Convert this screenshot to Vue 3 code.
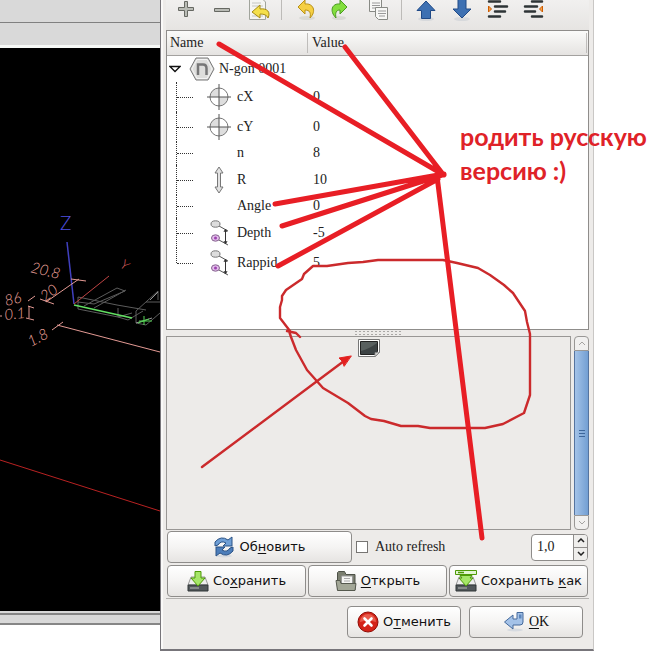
<script setup>
import { ref } from 'vue'

const rows = ref([
  { name: 'cX', value: '0', icon: 'center', size: 'tall' },
  { name: 'cY', value: '0', icon: 'center', size: 'tall' },
  { name: 'n', value: '8', icon: '', size: 'short' },
  { name: 'R', value: '10', icon: 'radius', size: 'tall' },
  { name: 'Angle', value: '0', icon: '', size: 'short' },
  { name: 'Depth', value: '-5', icon: 'depth', size: 'tall' },
  { name: 'Rappid', value: '5', icon: 'depth', size: 'tall last' }
])
const autoRefresh = ref(false)
const interval = ref('1,0')

function step(delta) {
  const next = Math.max(0, parseFloat(interval.value.replace(',', '.')) + delta)
  interval.value = next.toFixed(1).replace('.', ',')
}
</script>

<template>
  <main class="screen">
    <section class="editor" aria-label="Preview">
      <div class="bar"></div>
      <div class="bar second"></div>
      <svg class="canvas" viewBox="0 48 160 563" preserveAspectRatio="xMinYMin slice" fill="none" stroke-width="1">
        <g stroke="#5c5c5c">
          <path d="M78 297V309L118 317M78 297L117 305 146 310M78 302L94 304 125 291 117 288 84 306M94 308L126 290M118 308V317L128 320 143 311M136 311V323L146 325 160 313M136 311L158 291V300M146 302L160 302M118 317L132 313" />
          <path d="M150 300L158 292M136 323L152 318" stroke="#969696" />
        </g>
        <path d="M74 305L132 318" stroke="#62e062" stroke-width="1.500" />
        <path d="M139 321H152M144 316V325M138 323L149 319" stroke="#55d455" />
        <path d="M67 242L74 304" stroke="#4040c0" stroke-width="1.500" />
        <path d="M74 304L109 276" stroke="#c04444" />
        <path d="M0 460L160 511" stroke="#b82222" />
        <g stroke="#e49a94">
          <path d="M46 302L79 279M40 299L54 304M71 279L86 281M57 325L160 352M52 330L63 322M28 301L35 296M0 316H2M28 306L34 308M26 318L34 320M29 306V318" />
        </g>
        <text x="60" y="230" class="axis-z">Z</text>
        <text transform="translate(119 266) rotate(40)" class="axis-y">Y</text>
        <g class="dims">
          <text transform="translate(30 272) rotate(14)">20.8</text>
          <text transform="translate(45 302) rotate(-36)">20</text>
          <text transform="translate(6 306) rotate(-14)">86</text>
          <text transform="translate(5 320) rotate(-6)">0.1</text>
          <text transform="translate(31 347) rotate(-28)">1.8</text>
        </g>
      </svg>
      <div class="status"></div>
    </section>

    <section class="dialog" aria-label="Properties">
      <div class="toolbar">
        <button aria-label="Add"><svg viewBox="0 0 24 24"><path d="M10.500 3.500h3v6h6v3h-6v6h-3v-6h-6v-3h6z" fill="#b9bbb5" stroke="#666862" /></svg></button>
        <button aria-label="Remove"><svg viewBox="0 0 24 24"><path d="M4.500 10.500h15v3h-15z" fill="#b9bbb5" stroke="#666862" /></svg></button>
        <button aria-label="Revert"><svg viewBox="0 0 24 24">
          <path d="M3.500 1h13l3 3v17.500h-16z" fill="#f5f5f2" stroke="#a1a49c" /><path d="M6 5h9M6 8h11M6 18h11" stroke="#c4c6c1" />
          <path d="M6 14l8-7v4c7-1 11 3 8 9-1-3-4-4-8-4v4z" fill="#f5e04a" stroke="#a58a14" />
        </svg></button>
        <span class="divider"></span>
        <button aria-label="Undo"><svg viewBox="0 0 24 24">
          <ellipse cx="13" cy="20" rx="8" ry="2" fill="#d9d9d5" /><path d="M4 9l7-7v4c8-1 12 7 5 14 1-5 0-8-5-8v4z" fill="#f5cf42" stroke="#b99116" />
        </svg></button>
        <button aria-label="Redo"><svg viewBox="0 0 24 24">
          <ellipse cx="9" cy="20" rx="7" ry="2" fill="#d9d9d5" /><path d="M17 9l-7-7v4C2 5-1 13 6 20c-1-5 0-8 4-8v4z" fill="#83df3e" stroke="#4b9a21" />
        </svg></button>
        <button aria-label="Duplicate"><svg viewBox="-1 0 24 24">
          <path d="M2.500 1h12v12.500h-12z" fill="#f7f7f5" stroke="#888a85" /><path d="M5 5h8M5 7.500h8M5 10h6" stroke="#999" />
          <path d="M8.500 9.500h12v12h-9l-3-3z" fill="#f7f7f5" stroke="#888a85" /><path d="M11 13h8M11 15.500h8M12 18h6" stroke="#999" />
        </svg></button>
        <span class="divider"></span>
        <button aria-label="Move up"><svg viewBox="0 0 24 24">
          <ellipse cx="12" cy="21" rx="8" ry="2" fill="#d7d9dc" /><path d="M12 3L21 12.500H16.500V20.500H7.500V12.500H3z" fill="#3d70b2" stroke="#204a87" />
        </svg></button>
        <button aria-label="Move down"><svg viewBox="0 0 24 24">
          <ellipse cx="12" cy="21" rx="8" ry="2" fill="#d7d9dc" /><path d="M8 1h8v10h5L12 20 3 11h5z" fill="#3d70b2" stroke="#204a87" />
        </svg></button>
        <button aria-label="Indent"><svg viewBox="0 0 24 24">
          <path d="M3 3.500h11M9 8.500h12M9 13.500h10M3 18.500h11" stroke="#2e3436" stroke-width="2.500" stroke-linecap="round" /><path d="M2.500 8l3 3-3 3z" fill="#f5a34d" stroke="#ce5c00" />
        </svg></button>
        <button aria-label="Outdent"><svg viewBox="0 0 24 24">
          <path d="M10 3.500h10M3 8.500h12M3 13.500h10M10 18.500h10" stroke="#2e3436" stroke-width="2.500" stroke-linecap="round" /><path d="M20.500 8l-3 3 3 3z" fill="#f5a34d" stroke="#ce5c00" />
        </svg></button>
      </div>

      <div class="tree">
        <table>
          <thead>
            <tr><th class="name-col">Name</th><th><span class="value-head">Value</span></th></tr>
          </thead>
          <tbody>
            <tr>
              <td>
                <div class="cell root">
                  <svg class="arrow" viewBox="0 0 12 8"><path d="M1 1.500h10L6 6.500z" fill="#fff" stroke="#111" stroke-width="1.300" /></svg>
                  <svg class="ngon" viewBox="0 0 26 24">
                    <path d="M7 1h12l6 11-6 11H7L1 12z" fill="#dededc" stroke="#777" /><path d="M8 2.500h10l5 9.500-5 9.500H8L3 12z" fill="none" stroke="#f4f4f4" />
                    <path d="M9 18V7.500h5q3.500 0 3.500 4V18" fill="none" stroke="#777" stroke-width="2.500" />
                  </svg>
                  <span>N-gon 0001</span>
                </div>
              </td>
              <td></td>
            </tr>
            <tr v-for="row in rows" :key="row.name">
              <td>
                <div class="cell" :class="row.size">
                  <span class="branch"></span>
                  <span class="icon">
                    <svg v-if="row.icon === 'center'" viewBox="0 0 26 28">
                      <circle cx="13" cy="14" r="9" fill="#fff" /><path d="M13 14V5a9 9 0 0 0-9 9zM13 14v9a9 9 0 0 0 9-9z" fill="#dedede" />
                      <circle cx="13" cy="14" r="9" fill="none" stroke="#777" /><path d="M13 1v26M1 14h24" stroke="#555" />
                    </svg>
                    <svg v-else-if="row.icon === 'radius'" viewBox="0 0 26 28">
                      <path d="M13 1l4 6h-2.500v14H17l-4 6-4-6h2.500V7H9z" fill="#e2e2e2" stroke="#777" />
                    </svg>
                    <svg v-else-if="row.icon === 'depth'" viewBox="0 0 26 28">
                      <path d="M13 7l9 5M13 21l9 5" stroke="#555" /><path d="M19.500 11v13M18 13l1.500-3 1.500 3M18 22l1.500 3 1.500-3" fill="none" stroke="#333" />
                      <ellipse cx="9.500" cy="5" rx="4.500" ry="3.200" fill="#ddd" stroke="#777" />
                      <ellipse cx="9.500" cy="19" rx="4" ry="3.200" fill="#e2bdea" stroke="#86628f" /><circle cx="9.500" cy="19" r="1.500" fill="#9c40b0" />
                    </svg>
                  </span>
                  <span>{{ row.name }}</span>
                </div>
              </td>
              <td class="value">{{ row.value }}</td>
            </tr>
          </tbody>
        </table>
      </div>

      <div class="splitter"><span class="grip"></span></div>

      <div class="preview">
        <div class="pane">
          <svg class="image-icon" viewBox="0 0 22 18">
            <path d="M.5.5h21v13l-4 4H.5z" fill="#fff" stroke="#777" /><path d="M2.500 2.500h17v10l-3 3h-14z" fill="#3c4243" stroke="#222" />
            <path d="M3 12Q11 10 19 4V3H3z" fill="#59605f" /><path d="M17 17.500v-4h4.500z" fill="#d0d0ce" stroke="#888" stroke-width=".7" />
          </svg>
        </div>
        <div class="scrollbar">
          <button aria-label="Scroll up"><svg viewBox="0 0 8 5"><path d="M1 4l3-3 3 3" /></svg></button>
          <div class="thumb"><i></i><i></i><i></i></div>
          <button aria-label="Scroll down"><svg viewBox="0 0 8 5"><path d="M1 1l3 3 3-3" /></svg></button>
        </div>
      </div>

      <div class="refresh">
        <button class="btn">
          <svg viewBox="0 0 22 22">
            <ellipse cx="11" cy="20" rx="8" ry="1.500" fill="#d6dae0" />
            <path d="M2 10V6Q8-1 15 4l4-3v9h-9l3-3Q8 4 5 9z" fill="#6f9fd6" stroke="#2a5285" />
            <path d="M20 11v4q-6 7-13 2l-4 3v-9h9l-3 3q5 3 8-2z" fill="#4c7dba" stroke="#2a5285" />
          </svg>
          <span>Об<u>н</u>овить</span>
        </button>
        <input id="auto" v-model="autoRefresh" type="checkbox" />
        <label for="auto">Auto refresh</label>
        <div class="spin">
          <input v-model="interval" type="text" aria-label="Refresh interval" />
          <div class="steps">
            <button aria-label="Increase" @click="step(0.1)"><svg viewBox="0 0 8 5"><path d="M1 4l3-3 3 3" /></svg></button>
            <button aria-label="Decrease" @click="step(-0.1)"><svg viewBox="0 0 8 5"><path d="M1 1l3 3 3-3" /></svg></button>
          </div>
        </div>
      </div>

      <div class="files">
        <button class="btn">
          <svg viewBox="0 0 22 22">
            <path d="M4 7h14l3 8H1z" fill="#eee" stroke="#999" /><path d="M1 15h20v6H1z" fill="#52585b" stroke="#2e3436" /><path d="M3 18h9" stroke="#bbb" />
            <path d="M8 1.500h6V8h4l-7 8-7-8h4z" fill="#a6e668" stroke="#4e9a06" />
          </svg>
          <span>Со<u>х</u>ранить</span>
        </button>
        <button class="btn">
          <svg viewBox="0 0 22 22">
            <path d="M2.500 20V2.500l1-1h6l1.500 3h9V20z" fill="#7b7f70" stroke="#4d5147" /><path d="M6.500 6h11v10h-11z" fill="#f5f5f3" stroke="#999" /><path d="M9 8.500h6M9 11h6" stroke="#aaa" />
            <path d="M1 10.500h4l1 3h15l-1 7H2.500z" fill="#a3a797" stroke="#55594e" />
          </svg>
          <span><u>О</u>ткрыть</span>
        </button>
        <button class="btn">
          <svg viewBox="0 0 22 22">
            <path d="M4 7h14l3 8H1z" fill="#eee" stroke="#999" /><path d="M1 15h20v6H1z" fill="#52585b" stroke="#2e3436" /><path d="M3 18h9" stroke="#bbb" />
            <path d="M.5.5h21v4H.5z" fill="#e3f5d2" stroke="#4e9a06" /><path d="M3 2.500h6" stroke="#4e9a06" stroke-width="1.500" />
            <path d="M5 5.500h12L15 8h3l-7 8-7-8h3z" fill="#a6e668" stroke="#4e9a06" />
          </svg>
          <span>Сохранить <u>к</u>ак</span>
        </button>
      </div>

      <div class="actions">
        <button class="btn">
          <svg viewBox="0 0 22 22">
            <circle cx="11" cy="11" r="10" fill="#d42318" stroke="#8f0b05" /><path d="M3 11a8 8 0 0 1 16 0q-8-3-16 0z" fill="#e85a4b" />
            <path d="M7.500 7.500l7 7M14.500 7.500l-7 7" stroke="#fff" stroke-width="2.600" stroke-linecap="round" />
          </svg>
          <span>О<u>т</u>менить</span>
        </button>
        <button class="btn">
          <svg viewBox="0 0 22 22">
            <ellipse cx="12" cy="19" rx="8" ry="1.500" fill="#d6dae0" />
            <path d="M1.500 11L10 4v4h4V1.500h6V11q0 3-3 3h-7v4z" fill="#a4c2e8" stroke="#44699b" /><path d="M16 3.500h2.500v4H16z" fill="#5c86bd" />
          </svg>
          <span class="ok"><u>O</u>K</span>
        </button>
      </div>
    </section>

    <div class="notes">
      <svg viewBox="0 0 667 666" fill="none" stroke-linecap="round" stroke-linejoin="round">
        <g stroke="#cb2a2c" stroke-width="2.400">
          <path d="M300 337L296 333 287 331M290 331L280 318V307L282 300V296L286 290 302 279 304 274 313 266H327L348 263 363 262 378 260H443L457 263 478 268 490 275 504 285 513 293 525 311 527 322 530 334V395L524 413 503 424 485 428H430L418 426H401L384 421 371 419 365 416 348 403 323 388 307 370 296 350 291 337 289 331M202 467L344 361" />
          <path d="M351 356L339 358 342 361 344 366z" fill="#e3201f" stroke="#e3201f" stroke-width="1" />
        </g>
        <path d="M219 44L444 175M345 47L442 173M275 204L444 174M282 226L442 175M278 266L438 179M437 176L482 538" stroke="#e81e25" stroke-width="5" />
      </svg>
      <p>родить русскую<br />версию :)</p>
    </div>
  </main>
</template>

<style>
body {
  background: #fff;
}
</style>

<style scoped>
* {
  box-sizing: border-box;
}
.screen {
  position: relative;
  display: grid;
  grid-template-columns: 160px minmax(0, 434px) 1fr;
  align-items: start;
  overflow: hidden;
  min-height: 100vh;
  font: 14px/20px "Liberation Serif", serif;
  color: #222;
}
button {
  font: inherit;
  color: inherit;
  padding: 0;
  margin: 0;
}
svg {
  display: block;
  flex: none;
}

.editor {
  display: flex;
  flex-direction: column;
  background: #000;
}
.bar {
  height: 22px;
  background: #d9d9d9;
}
.bar.second {
  height: 26px;
  border-top: 1px solid #808080;
  border-bottom: 3px solid #f6f8f6;
}
.canvas {
  width: 100%;
  height: 563px;
}
.status {
  height: 14px;
  background: #d9d9d9;
  border-top: 2px solid #d9d9d9;
  border-bottom: 2px solid #868686;
  box-shadow: inset 0 2px #868686;
}
.axis-z {
  font: 300 19px Lato, sans-serif;
  fill: #5050e0;
}
.axis-y {
  font: 300 13px Lato, sans-serif;
  fill: #e06060;
}
.dims {
  font: italic 300 15px Lato, sans-serif;
  fill: #f0a49e;
}

.dialog {
  background: #edebe9;
  border: solid #77757a;
  border-width: 0 1px 2px;
  border-right-color: #c9c7c5;
  box-shadow: inset 2px 0 #faf9f8;
  padding: 0 4px 11px 5px;
}
.toolbar {
  display: flex;
  align-items: center;
  height: 30px;
  padding: 0 0 10px 2px;
  overflow: hidden;
  background: linear-gradient(#f1f0ef, #e6e4e2);
}
.toolbar button {
  width: 36px;
  height: 24px;
  display: grid;
  place-items: center;
  border: 0;
  background: none;
}
.toolbar svg {
  width: 24px;
  height: 24px;
}
.divider {
  width: 12px;
  height: 20px;
  background: linear-gradient(#bdbbb8, #bdbbb8) 5px 0 / 1px 100% no-repeat;
}

.tree {
  height: 300px;
  background: #fff;
  border: 1px solid #8f8d8b;
  overflow: hidden;
}
table {
  width: 100%;
  border-collapse: collapse;
  table-layout: fixed;
}
th {
  height: 24px;
  padding: 0 3px;
  text-align: left;
  font-weight: 400;
  background: linear-gradient(#fbfbfa, #e5e3e1);
  border-bottom: 1px solid #a3a19f;
}
.name-col {
  width: 140px;
}
th:last-child {
  padding: 0;
}
.value-head {
  display: block;
  padding-left: 4px;
  border: solid #bfbdbb;
  border-width: 0 1px;
  margin-right: 1px;
}
td {
  padding: 0;
}
.cell {
  display: flex;
  align-items: center;
}
.root {
  height: 26px;
}
.tall {
  height: 30px;
}
.short {
  height: 23px;
}
.arrow {
  width: 12px;
  height: 8px;
  margin: 0 8px 0 2px;
}
.ngon {
  width: 26px;
  height: 24px;
  margin-right: 4px;
}
.branch {
  align-self: stretch;
  width: 17px;
  margin: 0 13px 0 9px;
  border-left: 1px dotted #333;
}
.branch::before {
  content: "";
  display: block;
  height: 50%;
  border-bottom: 1px dotted #333;
}
.last .branch {
  align-self: flex-start;
  height: 15px;
}
.last .branch::before {
  height: 100%;
}
.icon {
  width: 26px;
  margin-right: 5px;
}
.icon svg {
  width: 26px;
  height: 28px;
}
.value {
  padding-left: 6px;
}

.splitter {
  display: grid;
  place-items: center;
  height: 6px;
}
.grip {
  width: 47px;
  height: 6px;
  background: radial-gradient(circle, #a9a7a5 0 1px, transparent 1px) 0 0 / 4px 3px;
}

.preview {
  display: flex;
  gap: 3px;
  height: 194px;
}
.pane {
  flex: 1;
  display: flex;
  justify-content: center;
  padding-top: 2px;
  border: 1px solid #999795;
}
.image-icon {
  width: 22px;
  height: 18px;
}
.scrollbar {
  width: 15px;
  display: flex;
  flex-direction: column;
}
.scrollbar button {
  height: 15px;
  display: grid;
  place-items: center;
  border: 1px solid #999795;
  border-radius: 4px 4px 0 0;
  background: #f1f0ef;
}
.scrollbar button:last-child {
  border-radius: 0 0 4px 4px;
}
.scrollbar svg {
  width: 8px;
  height: 5px;
  fill: none;
  stroke: #a5a3a1;
}
.thumb {
  flex: 1;
  display: flex;
  flex-direction: column;
  align-items: center;
  justify-content: center;
  gap: 2px;
  border: solid #56749f;
  border-width: 0 1px;
  background: linear-gradient(90deg, #a4c3e8, #739fd3);
}
.thumb i {
  width: 6px;
  height: 1px;
  background: #3d669b;
}

.btn {
  display: flex;
  align-items: center;
  justify-content: center;
  gap: 4px;
  height: 32px;
  border: 1px solid #8e8c8a;
  border-radius: 4px;
  background: linear-gradient(#fff, #f5f4f3 50%, #e6e4e2);
  font: 13px/20px "DejaVu Sans", sans-serif;
  color: #111;
  white-space: nowrap;
}
.btn svg {
  width: 22px;
  height: 22px;
}
.btn u {
  text-underline-offset: 2px;
}
.btn .ok {
  font: 14px/20px "Liberation Serif", serif;
}
.refresh {
  display: flex;
  align-items: center;
  height: 34px;
  padding: 1px;
}
.refresh .btn {
  width: 185px;
}
.refresh input[type="checkbox"] {
  appearance: none;
  width: 12px;
  height: 12px;
  margin: 0 7px 0 4px;
  border: 1px solid #777573;
  background: #fff;
}
.refresh input[type="checkbox"]:checked {
  background: #4a78b5;
}
.spin {
  display: flex;
  width: 57px;
  height: 27px;
  margin-left: auto;
  border: 1px solid #8e8c8a;
  border-radius: 4px;
  background: #fff;
  overflow: hidden;
}
.spin input {
  flex: 1;
  min-width: 0;
  padding: 0 5px;
  border: 0;
  background: none;
  font: 14px/20px "Liberation Serif", serif;
  color: #222;
}
.steps {
  width: 14px;
  display: grid;
  grid-template-rows: 1fr 1fr;
  border-left: 1px solid #8e8c8a;
}
.steps button {
  display: grid;
  place-items: center;
  border: 0;
  background: #efeeec;
}
.steps button + button {
  border-top: 1px solid #8e8c8a;
}
.steps svg {
  width: 8px;
  height: 5px;
  fill: none;
  stroke: #222;
  stroke-width: 1.5;
}
.files {
  display: grid;
  grid-template-columns: repeat(3, 1fr);
  gap: 2px;
  padding: 1px;
  border-bottom: 1px solid #b3b1af;
}
.actions {
  display: flex;
  justify-content: flex-end;
  gap: 8px;
  padding: 7px 6px 0 0;
}
.actions .btn {
  width: 114px;
}

.notes {
  position: absolute;
  top: 0;
  left: 0;
  pointer-events: none;
}
.notes svg {
  width: 667px;
  height: 666px;
}
.notes p {
  position: absolute;
  top: 119px;
  left: 460px;
  margin: 0;
  font: 700 25px/34px Lato, "Open Sans", sans-serif;
  color: #df2228;
  white-space: nowrap;
}
</style>
